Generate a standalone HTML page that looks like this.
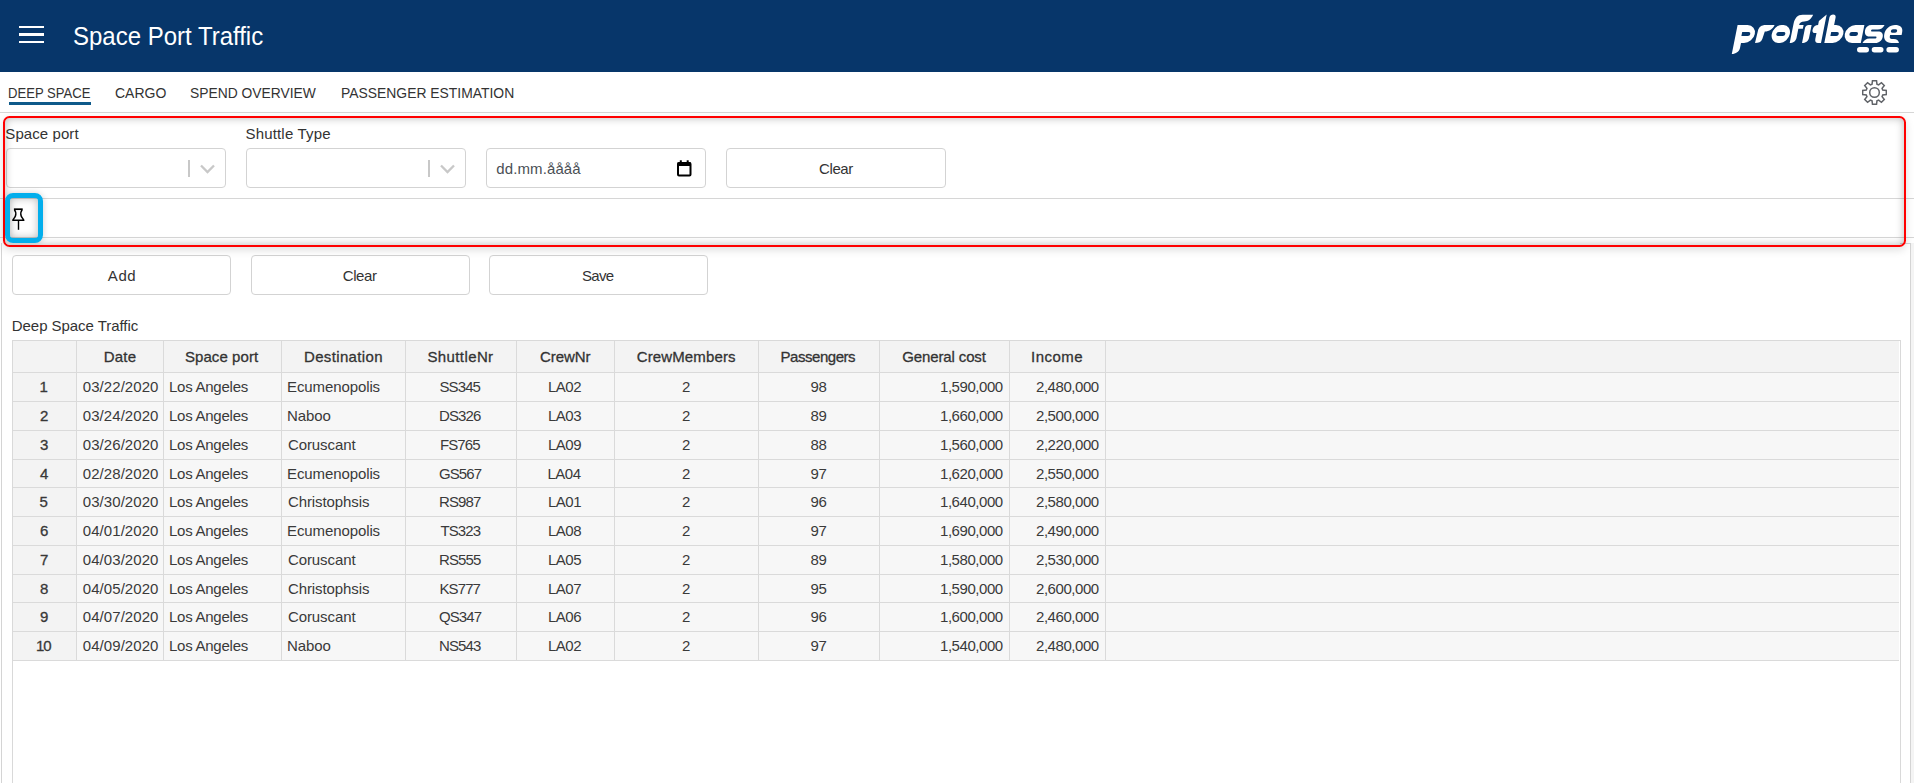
<!DOCTYPE html><html><head><meta charset="utf-8"><title>Space Port Traffic</title><style>
html,body{margin:0;padding:0;}
body{width:1914px;height:783px;overflow:hidden;position:relative;background:#fff;font-family:"Liberation Sans",sans-serif;}
.t{position:absolute;white-space:nowrap;}
.abs{position:absolute;}
</style></head><body>
<div class="abs" style="left:0;top:0;width:1914px;height:72px;background:#07366a"></div>
<div class="abs" style="left:19px;top:26px;width:25px;height:2.3px;background:#fff"></div>
<div class="abs" style="left:19px;top:33px;width:25px;height:3px;background:#fff"></div>
<div class="abs" style="left:19px;top:41px;width:25px;height:2.3px;background:#fff"></div>
<div class="abs" style="left:9px;top:102px;width:82px;height:3px;background:#0e5a8a"></div>
<div class="abs" style="left:0;top:112px;width:1914px;height:1px;background:#d6d6d6"></div>
<div class="abs" style="left:6px;top:148px;width:218px;height:38px;border:1px solid #d3d3d3;border-radius:4px;background:#fff"></div>
<div class="abs" style="left:188px;top:160px;width:1.5px;height:17px;background:#c8c8c8"></div>
<svg class="abs" style="left:200px;top:164px" width="15" height="10" viewBox="0 0 15 10"><path d="M1 1.5 L7.5 8 L14 1.5" fill="none" stroke="#c8c8c8" stroke-width="2.3"/></svg>
<div class="abs" style="left:246px;top:148px;width:218px;height:38px;border:1px solid #d3d3d3;border-radius:4px;background:#fff"></div>
<div class="abs" style="left:428px;top:160px;width:1.5px;height:17px;background:#c8c8c8"></div>
<svg class="abs" style="left:440px;top:164px" width="15" height="10" viewBox="0 0 15 10"><path d="M1 1.5 L7.5 8 L14 1.5" fill="none" stroke="#c8c8c8" stroke-width="2.3"/></svg>
<div class="abs" style="left:486px;top:148px;width:218px;height:38px;border:1px solid #d3d3d3;border-radius:4px;background:#fff"></div>
<svg class="abs" style="left:676.5px;top:159.5px" width="15" height="17" viewBox="0 0 15 17"><rect x="1" y="3" width="12.5" height="12.5" rx="1" fill="none" stroke="#000" stroke-width="2"/><rect x="0.5" y="2.5" width="13.5" height="3.5" fill="#000"/><rect x="2.8" y="0.3" width="2" height="3" fill="#000"/><rect x="9.7" y="0.3" width="2" height="3" fill="#000"/></svg>
<div class="abs" style="left:726px;top:148px;width:218px;height:38px;border:1px solid #d3d3d3;border-radius:4px;background:#fff"></div>
<div class="abs" style="left:0;top:198px;width:1914px;height:1px;background:#d6d6d6"></div>
<div class="abs" style="left:0;top:237px;width:1914px;height:1px;background:#d6d6d6"></div>
<div class="abs" style="left:1px;top:243px;width:1908px;height:540px;border-left:1px solid #d4d4d4;border-right:1px solid #d4d4d4"></div>
<div class="abs" style="left:1900px;top:243px;width:10px;height:1px;background:#d4d4d4"></div>
<div class="abs" style="left:1911px;top:243px;width:3px;height:540px;background:#f4f4f4"></div>
<div class="abs" style="left:12px;top:255px;width:217px;height:38px;border:1px solid #d3d3d3;border-radius:4px;background:#fff"></div>
<div class="abs" style="left:251px;top:255px;width:217px;height:38px;border:1px solid #d3d3d3;border-radius:4px;background:#fff"></div>
<div class="abs" style="left:489px;top:255px;width:217px;height:38px;border:1px solid #d3d3d3;border-radius:4px;background:#fff"></div>
<div class="abs" style="left:12px;top:340px;width:1887px;height:443px;border:1px solid #d9d9d9;border-bottom:none;background:#fff"></div>
<div class="abs" style="left:13px;top:341px;width:1886px;height:31px;background:#f3f3f3"></div>
<div class="abs" style="left:13px;top:373px;width:1886px;height:287px;background:#f7f7f7"></div>
<div class="abs" style="left:13px;top:373px;width:63px;height:287px;background:#f3f3f3"></div>
<div class="abs" style="left:13px;top:372px;width:1886px;height:1px;background:#dadada"></div>
<div class="abs" style="left:13px;top:401px;width:1886px;height:1px;background:#dadada"></div>
<div class="abs" style="left:13px;top:430px;width:1886px;height:1px;background:#dadada"></div>
<div class="abs" style="left:13px;top:459px;width:1886px;height:1px;background:#dadada"></div>
<div class="abs" style="left:13px;top:487px;width:1886px;height:1px;background:#dadada"></div>
<div class="abs" style="left:13px;top:516px;width:1886px;height:1px;background:#dadada"></div>
<div class="abs" style="left:13px;top:545px;width:1886px;height:1px;background:#dadada"></div>
<div class="abs" style="left:13px;top:574px;width:1886px;height:1px;background:#dadada"></div>
<div class="abs" style="left:13px;top:602px;width:1886px;height:1px;background:#dadada"></div>
<div class="abs" style="left:13px;top:631px;width:1886px;height:1px;background:#dadada"></div>
<div class="abs" style="left:13px;top:660px;width:1886px;height:1px;background:#dadada"></div>
<div class="abs" style="left:76px;top:341px;width:1px;height:319px;background:#dadada"></div>
<div class="abs" style="left:163px;top:341px;width:1px;height:319px;background:#dadada"></div>
<div class="abs" style="left:281px;top:341px;width:1px;height:319px;background:#dadada"></div>
<div class="abs" style="left:405px;top:341px;width:1px;height:319px;background:#dadada"></div>
<div class="abs" style="left:516px;top:341px;width:1px;height:319px;background:#dadada"></div>
<div class="abs" style="left:614px;top:341px;width:1px;height:319px;background:#dadada"></div>
<div class="abs" style="left:758px;top:341px;width:1px;height:319px;background:#dadada"></div>
<div class="abs" style="left:879px;top:341px;width:1px;height:319px;background:#dadada"></div>
<div class="abs" style="left:1009px;top:341px;width:1px;height:319px;background:#dadada"></div>
<div class="abs" style="left:1105px;top:341px;width:1px;height:319px;background:#dadada"></div>
<svg class="abs" style="left:1862px;top:80px" width="25" height="25" viewBox="0 0 25 25"><path d="M10.04 4.26 L10.47 0.67 L14.53 0.67 L14.96 4.26 L16.59 4.93 L19.43 2.70 L22.30 5.57 L20.07 8.41 L20.74 10.04 L24.33 10.47 L24.33 14.53 L20.74 14.96 L20.07 16.59 L22.30 19.43 L19.43 22.30 L16.59 20.07 L14.96 20.74 L14.53 24.33 L10.47 24.33 L10.04 20.74 L8.41 20.07 L5.57 22.30 L2.70 19.43 L4.93 16.59 L4.26 14.96 L0.67 14.53 L0.67 10.47 L4.26 10.04 L4.93 8.41 L2.70 5.57 L5.57 2.70 L8.41 4.93 Z" fill="none" stroke="#606368" stroke-width="1.5"/><circle cx="12.5" cy="12.5" r="4.8" fill="none" stroke="#606368" stroke-width="1.5"/></svg>
<svg class="abs" style="left:1720px;top:8px" width="190" height="52" viewBox="1720 8 190 52"><g fill="#fff" fill-rule="evenodd"><g transform="matrix(1,0,-0.2,1,8.6,0)"><path d="M1734,25 H1744 A9,9 0 0 1 1744,43 H1741 V48 C1741,51.5 1738,54 1734,54 Z M1740,32 H1746.5 A2,2 0 0 1 1746.5,36 H1740 Z"/><path d="M1755,43 L1755.5,31 C1755.5,27 1758,25 1762,25 L1771,25 C1770,29 1767,31.5 1762.5,31.5 L1761.5,39 C1761,42 1758.5,43 1755,43 Z"/><path d="M1778,25 H1780 A8,9 0 0 1 1788,34 A8,9 0 0 1 1780,43 H1778 A8,9 0 0 1 1770,34 A8,9 0 0 1 1778,25 Z M1776.5,32 H1781.5 A2,2 0 0 1 1781.5,36 H1776.5 A2,2 0 0 1 1776.5,32 Z"/><path d="M1789.7,43 L1789.7,24 C1789.7,18 1792,14.8 1797,14.8 L1807.5,14.8 C1806.5,19 1804,21.5 1800,21.5 C1797,21.5 1795.5,23 1795.5,25 L1800,25 L1800,28.8 L1795.5,28.8 L1795.5,38 C1795.5,41 1793,43 1789.7,43 Z"/><path d="M1802,43 L1802,28 C1802,26 1803.5,25 1805,25 L1808,25 L1808,38 C1808,41 1805.5,43 1802,43 Z"/><path d="M1821,14.6 L1821,43 L1818,43 C1816,43 1814.5,41.5 1814.5,39 L1814.5,33 L1812.5,33 C1810.5,33 1809.7,31.3 1810,29 C1810.4,26.5 1812,25 1814.5,25 L1814.5,21 Z"/><path d="M1824.3,43 L1824.3,17.5 C1824.3,15.5 1825.8,14.5 1827.5,14.5 C1829.2,14.5 1830.5,15.5 1830.5,17.5 L1830.5,25 L1832.5,25 A9,9 0 0 1 1832.5,43 Z M1829,32 H1835 A2,2 0 0 1 1835,36 H1829 Z"/><path d="M1860.8,25 L1860.8,43 L1852,43 A9,9 0 0 1 1852,25 Z M1849.6,32 H1854.2 A2,2 0 0 1 1854.2,36 H1849.6 A2,2 0 0 1 1849.6,32 Z"/><path d="M1862.5,30 C1862.5,27 1864.5,25 1868,25 L1881,25 C1880,28 1878,29.5 1875,29.5 L1869.5,29.5 C1868.3,29.5 1868.3,31.5 1869.5,31.5 L1875.5,31.5 C1879.5,31.5 1881.5,33.5 1881.5,37 C1881.5,40.5 1879,43 1875.5,43 L1862.5,43 C1863.5,40 1865.5,38.5 1868.5,38.5 L1874.5,38.5 C1875.7,38.5 1875.7,36.5 1874.5,36.5 L1868,36.5 C1864.5,36.5 1862.5,34 1862.5,30 Z"/><path d="M1900,35 L1900,32 C1900,27.5 1896.5,25 1891.5,25 C1886,25 1882.5,29 1882.5,34 C1882.5,39.5 1886,43 1891.5,43 L1899,43 C1898,40.5 1896,39 1893,39 L1891,39 C1889.5,39 1888.5,38 1888.5,36.5 L1888.5,35 Z M1890.2,29.2 H1893 A1.75,1.75 0 0 1 1893,32.7 H1890.2 A1.75,1.75 0 0 1 1890.2,29.2 Z"/></g><rect x="1857" y="47" width="12" height="5.5" rx="2.75"/><rect x="1871.7" y="47" width="11.799999999999955" height="5.5" rx="2.75"/><rect x="1886.4" y="47" width="12.5" height="5.5" rx="2.75"/></g></svg>
<div class="t" style="left:73.0px;top:24.0px;font-size:25px;line-height:25px;color:#fff;transform:scaleX(0.9594);transform-origin:0 0;">Space Port Traffic</div>
<div class="t" style="left:8.2px;top:85.0px;font-size:15.5px;line-height:15.5px;color:#333;transform:scaleX(0.8438);transform-origin:0 0;">DEEP SPACE</div>
<div class="t" style="left:114.9px;top:85.0px;font-size:15.5px;line-height:15.5px;color:#333;transform:scaleX(0.9036);transform-origin:0 0;">CARGO</div>
<div class="t" style="left:190.4px;top:85.0px;font-size:15.5px;line-height:15.5px;color:#333;transform:scaleX(0.8921);transform-origin:0 0;">SPEND OVERVIEW</div>
<div class="t" style="left:340.9px;top:85.0px;font-size:15.5px;line-height:15.5px;color:#333;transform:scaleX(0.8963);transform-origin:0 0;">PASSENGER ESTIMATION</div>
<div class="t" style="left:5.3px;top:126.0px;font-size:15px;line-height:15px;color:#333;letter-spacing:0.08px;">Space port</div>
<div class="t" style="left:245.5px;top:126.0px;font-size:15px;line-height:15px;color:#333;letter-spacing:0.17px;">Shuttle Type</div>
<div class="t" style="left:496.3px;top:161.0px;font-size:15px;line-height:15px;color:#4a4f55;letter-spacing:0.11px;">dd.mm.åååå</div>
<div class="t" style="left:819.0px;top:161.0px;font-size:15px;line-height:15px;color:#333;letter-spacing:-0.38px;">Clear</div>
<div class="t" style="left:107.8px;top:268.0px;font-size:15px;line-height:15px;color:#333;letter-spacing:0.60px;">Add</div>
<div class="t" style="left:342.7px;top:268.0px;font-size:15px;line-height:15px;color:#333;letter-spacing:-0.38px;">Clear</div>
<div class="t" style="left:582.0px;top:268.0px;font-size:15px;line-height:15px;color:#333;letter-spacing:-0.70px;">Save</div>
<div class="t" style="left:11.8px;top:318.0px;font-size:15px;line-height:15px;color:#333;letter-spacing:-0.05px;">Deep Space Traffic</div>
<div class="t" style="left:103.7px;top:349.0px;font-size:15px;line-height:15px;color:#333;letter-spacing:0.23px;-webkit-text-stroke:0.3px #333;">Date</div>
<div class="t" style="left:184.9px;top:349.0px;font-size:15px;line-height:15px;color:#333;letter-spacing:0.08px;-webkit-text-stroke:0.3px #333;">Space port</div>
<div class="t" style="left:304.0px;top:349.0px;font-size:15px;line-height:15px;color:#333;letter-spacing:0.35px;-webkit-text-stroke:0.3px #333;">Destination</div>
<div class="t" style="left:427.4px;top:349.0px;font-size:15px;line-height:15px;color:#333;letter-spacing:0.40px;-webkit-text-stroke:0.3px #333;">ShuttleNr</div>
<div class="t" style="left:540.0px;top:349.0px;font-size:15px;line-height:15px;color:#333;letter-spacing:-0.08px;-webkit-text-stroke:0.3px #333;">CrewNr</div>
<div class="t" style="left:636.7px;top:349.0px;font-size:15px;line-height:15px;color:#333;letter-spacing:0.13px;-webkit-text-stroke:0.3px #333;">CrewMembers</div>
<div class="t" style="left:780.5px;top:349.0px;font-size:15px;line-height:15px;color:#333;letter-spacing:-0.46px;-webkit-text-stroke:0.3px #333;">Passengers</div>
<div class="t" style="left:902.2px;top:349.0px;font-size:15px;line-height:15px;color:#333;letter-spacing:-0.12px;-webkit-text-stroke:0.3px #333;">General cost</div>
<div class="t" style="left:1031.0px;top:349.0px;font-size:15px;line-height:15px;color:#333;letter-spacing:0.46px;-webkit-text-stroke:0.3px #333;">Income</div>
<div class="t" style="left:39.5px;top:379.0px;font-size:15px;line-height:15px;color:#3a3a3a;letter-spacing:-1.00px;-webkit-text-stroke:0.3px #333;">1</div>
<div class="t" style="left:82.8px;top:379.0px;font-size:15px;line-height:15px;color:#3a3a3a;letter-spacing:0.06px;">03/22/2020</div>
<div class="t" style="left:169.0px;top:379.0px;font-size:15px;line-height:15px;color:#3a3a3a;letter-spacing:-0.25px;">Los Angeles</div>
<div class="t" style="left:287.0px;top:379.0px;font-size:15px;line-height:15px;color:#3a3a3a;letter-spacing:-0.10px;">Ecumenopolis</div>
<div class="t" style="left:439.5px;top:379.0px;font-size:15px;line-height:15px;color:#3a3a3a;letter-spacing:-0.90px;">SS345</div>
<div class="t" style="left:548.0px;top:379.0px;font-size:15px;line-height:15px;color:#3a3a3a;letter-spacing:-0.50px;">LA02</div>
<div class="t" style="left:682.0px;top:379.0px;font-size:15px;line-height:15px;color:#3a3a3a;">2</div>
<div class="t" style="left:810.5px;top:379.0px;font-size:15px;line-height:15px;color:#3a3a3a;letter-spacing:-0.30px;">98</div>
<div class="t" style="left:940.0px;top:379.0px;font-size:15px;line-height:15px;color:#3a3a3a;letter-spacing:-0.45px;">1,590,000</div>
<div class="t" style="left:1036.0px;top:379.0px;font-size:15px;line-height:15px;color:#3a3a3a;letter-spacing:-0.45px;">2,480,000</div>
<div class="t" style="left:40.0px;top:408.0px;font-size:15px;line-height:15px;color:#3a3a3a;letter-spacing:-1.00px;-webkit-text-stroke:0.3px #333;">2</div>
<div class="t" style="left:82.8px;top:408.0px;font-size:15px;line-height:15px;color:#3a3a3a;letter-spacing:0.06px;">03/24/2020</div>
<div class="t" style="left:169.0px;top:408.0px;font-size:15px;line-height:15px;color:#3a3a3a;letter-spacing:-0.25px;">Los Angeles</div>
<div class="t" style="left:287.0px;top:408.0px;font-size:15px;line-height:15px;color:#3a3a3a;letter-spacing:-0.10px;">Naboo</div>
<div class="t" style="left:439.0px;top:408.0px;font-size:15px;line-height:15px;color:#3a3a3a;letter-spacing:-0.90px;">DS326</div>
<div class="t" style="left:548.0px;top:408.0px;font-size:15px;line-height:15px;color:#3a3a3a;letter-spacing:-0.50px;">LA03</div>
<div class="t" style="left:682.0px;top:408.0px;font-size:15px;line-height:15px;color:#3a3a3a;">2</div>
<div class="t" style="left:810.5px;top:408.0px;font-size:15px;line-height:15px;color:#3a3a3a;letter-spacing:-0.30px;">89</div>
<div class="t" style="left:940.0px;top:408.0px;font-size:15px;line-height:15px;color:#3a3a3a;letter-spacing:-0.45px;">1,660,000</div>
<div class="t" style="left:1036.0px;top:408.0px;font-size:15px;line-height:15px;color:#3a3a3a;letter-spacing:-0.45px;">2,500,000</div>
<div class="t" style="left:40.0px;top:437.0px;font-size:15px;line-height:15px;color:#3a3a3a;letter-spacing:-1.00px;-webkit-text-stroke:0.3px #333;">3</div>
<div class="t" style="left:82.8px;top:437.0px;font-size:15px;line-height:15px;color:#3a3a3a;letter-spacing:0.06px;">03/26/2020</div>
<div class="t" style="left:169.0px;top:437.0px;font-size:15px;line-height:15px;color:#3a3a3a;letter-spacing:-0.25px;">Los Angeles</div>
<div class="t" style="left:288.0px;top:437.0px;font-size:15px;line-height:15px;color:#3a3a3a;letter-spacing:-0.10px;">Coruscant</div>
<div class="t" style="left:440.0px;top:437.0px;font-size:15px;line-height:15px;color:#3a3a3a;letter-spacing:-0.90px;">FS765</div>
<div class="t" style="left:548.0px;top:437.0px;font-size:15px;line-height:15px;color:#3a3a3a;letter-spacing:-0.50px;">LA09</div>
<div class="t" style="left:682.0px;top:437.0px;font-size:15px;line-height:15px;color:#3a3a3a;">2</div>
<div class="t" style="left:810.5px;top:437.0px;font-size:15px;line-height:15px;color:#3a3a3a;letter-spacing:-0.30px;">88</div>
<div class="t" style="left:940.0px;top:437.0px;font-size:15px;line-height:15px;color:#3a3a3a;letter-spacing:-0.45px;">1,560,000</div>
<div class="t" style="left:1036.0px;top:437.0px;font-size:15px;line-height:15px;color:#3a3a3a;letter-spacing:-0.45px;">2,220,000</div>
<div class="t" style="left:40.0px;top:466.0px;font-size:15px;line-height:15px;color:#3a3a3a;letter-spacing:-1.00px;-webkit-text-stroke:0.3px #333;">4</div>
<div class="t" style="left:82.8px;top:466.0px;font-size:15px;line-height:15px;color:#3a3a3a;letter-spacing:0.06px;">02/28/2020</div>
<div class="t" style="left:169.0px;top:466.0px;font-size:15px;line-height:15px;color:#3a3a3a;letter-spacing:-0.25px;">Los Angeles</div>
<div class="t" style="left:287.0px;top:466.0px;font-size:15px;line-height:15px;color:#3a3a3a;letter-spacing:-0.10px;">Ecumenopolis</div>
<div class="t" style="left:439.0px;top:466.0px;font-size:15px;line-height:15px;color:#3a3a3a;letter-spacing:-0.90px;">GS567</div>
<div class="t" style="left:547.5px;top:466.0px;font-size:15px;line-height:15px;color:#3a3a3a;letter-spacing:-0.50px;">LA04</div>
<div class="t" style="left:682.0px;top:466.0px;font-size:15px;line-height:15px;color:#3a3a3a;">2</div>
<div class="t" style="left:810.5px;top:466.0px;font-size:15px;line-height:15px;color:#3a3a3a;letter-spacing:-0.30px;">97</div>
<div class="t" style="left:940.0px;top:466.0px;font-size:15px;line-height:15px;color:#3a3a3a;letter-spacing:-0.45px;">1,620,000</div>
<div class="t" style="left:1036.0px;top:466.0px;font-size:15px;line-height:15px;color:#3a3a3a;letter-spacing:-0.45px;">2,550,000</div>
<div class="t" style="left:39.5px;top:494.0px;font-size:15px;line-height:15px;color:#3a3a3a;letter-spacing:-1.00px;-webkit-text-stroke:0.3px #333;">5</div>
<div class="t" style="left:82.8px;top:494.0px;font-size:15px;line-height:15px;color:#3a3a3a;letter-spacing:0.06px;">03/30/2020</div>
<div class="t" style="left:169.0px;top:494.0px;font-size:15px;line-height:15px;color:#3a3a3a;letter-spacing:-0.25px;">Los Angeles</div>
<div class="t" style="left:288.0px;top:494.0px;font-size:15px;line-height:15px;color:#3a3a3a;letter-spacing:-0.10px;">Christophsis</div>
<div class="t" style="left:439.0px;top:494.0px;font-size:15px;line-height:15px;color:#3a3a3a;letter-spacing:-0.90px;">RS987</div>
<div class="t" style="left:548.0px;top:494.0px;font-size:15px;line-height:15px;color:#3a3a3a;letter-spacing:-0.50px;">LA01</div>
<div class="t" style="left:682.0px;top:494.0px;font-size:15px;line-height:15px;color:#3a3a3a;">2</div>
<div class="t" style="left:810.5px;top:494.0px;font-size:15px;line-height:15px;color:#3a3a3a;letter-spacing:-0.30px;">96</div>
<div class="t" style="left:940.0px;top:494.0px;font-size:15px;line-height:15px;color:#3a3a3a;letter-spacing:-0.45px;">1,640,000</div>
<div class="t" style="left:1036.0px;top:494.0px;font-size:15px;line-height:15px;color:#3a3a3a;letter-spacing:-0.45px;">2,580,000</div>
<div class="t" style="left:40.0px;top:523.0px;font-size:15px;line-height:15px;color:#3a3a3a;letter-spacing:-1.00px;-webkit-text-stroke:0.3px #333;">6</div>
<div class="t" style="left:82.8px;top:523.0px;font-size:15px;line-height:15px;color:#3a3a3a;letter-spacing:0.06px;">04/01/2020</div>
<div class="t" style="left:169.0px;top:523.0px;font-size:15px;line-height:15px;color:#3a3a3a;letter-spacing:-0.25px;">Los Angeles</div>
<div class="t" style="left:287.0px;top:523.0px;font-size:15px;line-height:15px;color:#3a3a3a;letter-spacing:-0.10px;">Ecumenopolis</div>
<div class="t" style="left:440.5px;top:523.0px;font-size:15px;line-height:15px;color:#3a3a3a;letter-spacing:-0.90px;">TS323</div>
<div class="t" style="left:548.0px;top:523.0px;font-size:15px;line-height:15px;color:#3a3a3a;letter-spacing:-0.50px;">LA08</div>
<div class="t" style="left:682.0px;top:523.0px;font-size:15px;line-height:15px;color:#3a3a3a;">2</div>
<div class="t" style="left:810.5px;top:523.0px;font-size:15px;line-height:15px;color:#3a3a3a;letter-spacing:-0.30px;">97</div>
<div class="t" style="left:940.0px;top:523.0px;font-size:15px;line-height:15px;color:#3a3a3a;letter-spacing:-0.45px;">1,690,000</div>
<div class="t" style="left:1036.0px;top:523.0px;font-size:15px;line-height:15px;color:#3a3a3a;letter-spacing:-0.45px;">2,490,000</div>
<div class="t" style="left:40.0px;top:552.0px;font-size:15px;line-height:15px;color:#3a3a3a;letter-spacing:-1.00px;-webkit-text-stroke:0.3px #333;">7</div>
<div class="t" style="left:82.8px;top:552.0px;font-size:15px;line-height:15px;color:#3a3a3a;letter-spacing:0.06px;">04/03/2020</div>
<div class="t" style="left:169.0px;top:552.0px;font-size:15px;line-height:15px;color:#3a3a3a;letter-spacing:-0.25px;">Los Angeles</div>
<div class="t" style="left:288.0px;top:552.0px;font-size:15px;line-height:15px;color:#3a3a3a;letter-spacing:-0.10px;">Coruscant</div>
<div class="t" style="left:439.0px;top:552.0px;font-size:15px;line-height:15px;color:#3a3a3a;letter-spacing:-0.90px;">RS555</div>
<div class="t" style="left:548.0px;top:552.0px;font-size:15px;line-height:15px;color:#3a3a3a;letter-spacing:-0.50px;">LA05</div>
<div class="t" style="left:682.0px;top:552.0px;font-size:15px;line-height:15px;color:#3a3a3a;">2</div>
<div class="t" style="left:810.5px;top:552.0px;font-size:15px;line-height:15px;color:#3a3a3a;letter-spacing:-0.30px;">89</div>
<div class="t" style="left:940.0px;top:552.0px;font-size:15px;line-height:15px;color:#3a3a3a;letter-spacing:-0.45px;">1,580,000</div>
<div class="t" style="left:1036.0px;top:552.0px;font-size:15px;line-height:15px;color:#3a3a3a;letter-spacing:-0.45px;">2,530,000</div>
<div class="t" style="left:40.0px;top:581.0px;font-size:15px;line-height:15px;color:#3a3a3a;letter-spacing:-1.00px;-webkit-text-stroke:0.3px #333;">8</div>
<div class="t" style="left:82.8px;top:581.0px;font-size:15px;line-height:15px;color:#3a3a3a;letter-spacing:0.06px;">04/05/2020</div>
<div class="t" style="left:169.0px;top:581.0px;font-size:15px;line-height:15px;color:#3a3a3a;letter-spacing:-0.25px;">Los Angeles</div>
<div class="t" style="left:288.0px;top:581.0px;font-size:15px;line-height:15px;color:#3a3a3a;letter-spacing:-0.10px;">Christophsis</div>
<div class="t" style="left:439.5px;top:581.0px;font-size:15px;line-height:15px;color:#3a3a3a;letter-spacing:-0.90px;">KS777</div>
<div class="t" style="left:548.0px;top:581.0px;font-size:15px;line-height:15px;color:#3a3a3a;letter-spacing:-0.50px;">LA07</div>
<div class="t" style="left:682.0px;top:581.0px;font-size:15px;line-height:15px;color:#3a3a3a;">2</div>
<div class="t" style="left:810.5px;top:581.0px;font-size:15px;line-height:15px;color:#3a3a3a;letter-spacing:-0.30px;">95</div>
<div class="t" style="left:940.0px;top:581.0px;font-size:15px;line-height:15px;color:#3a3a3a;letter-spacing:-0.45px;">1,590,000</div>
<div class="t" style="left:1036.0px;top:581.0px;font-size:15px;line-height:15px;color:#3a3a3a;letter-spacing:-0.45px;">2,600,000</div>
<div class="t" style="left:40.0px;top:609.0px;font-size:15px;line-height:15px;color:#3a3a3a;letter-spacing:-1.00px;-webkit-text-stroke:0.3px #333;">9</div>
<div class="t" style="left:82.8px;top:609.0px;font-size:15px;line-height:15px;color:#3a3a3a;letter-spacing:0.06px;">04/07/2020</div>
<div class="t" style="left:169.0px;top:609.0px;font-size:15px;line-height:15px;color:#3a3a3a;letter-spacing:-0.25px;">Los Angeles</div>
<div class="t" style="left:288.0px;top:609.0px;font-size:15px;line-height:15px;color:#3a3a3a;letter-spacing:-0.10px;">Coruscant</div>
<div class="t" style="left:439.0px;top:609.0px;font-size:15px;line-height:15px;color:#3a3a3a;letter-spacing:-0.90px;">QS347</div>
<div class="t" style="left:548.0px;top:609.0px;font-size:15px;line-height:15px;color:#3a3a3a;letter-spacing:-0.50px;">LA06</div>
<div class="t" style="left:682.0px;top:609.0px;font-size:15px;line-height:15px;color:#3a3a3a;">2</div>
<div class="t" style="left:810.5px;top:609.0px;font-size:15px;line-height:15px;color:#3a3a3a;letter-spacing:-0.30px;">96</div>
<div class="t" style="left:940.0px;top:609.0px;font-size:15px;line-height:15px;color:#3a3a3a;letter-spacing:-0.45px;">1,600,000</div>
<div class="t" style="left:1036.0px;top:609.0px;font-size:15px;line-height:15px;color:#3a3a3a;letter-spacing:-0.45px;">2,460,000</div>
<div class="t" style="left:36.0px;top:638.0px;font-size:15px;line-height:15px;color:#3a3a3a;letter-spacing:-1.00px;-webkit-text-stroke:0.3px #333;">10</div>
<div class="t" style="left:82.8px;top:638.0px;font-size:15px;line-height:15px;color:#3a3a3a;letter-spacing:0.06px;">04/09/2020</div>
<div class="t" style="left:169.0px;top:638.0px;font-size:15px;line-height:15px;color:#3a3a3a;letter-spacing:-0.25px;">Los Angeles</div>
<div class="t" style="left:287.0px;top:638.0px;font-size:15px;line-height:15px;color:#3a3a3a;letter-spacing:-0.10px;">Naboo</div>
<div class="t" style="left:439.0px;top:638.0px;font-size:15px;line-height:15px;color:#3a3a3a;letter-spacing:-0.90px;">NS543</div>
<div class="t" style="left:548.0px;top:638.0px;font-size:15px;line-height:15px;color:#3a3a3a;letter-spacing:-0.50px;">LA02</div>
<div class="t" style="left:682.0px;top:638.0px;font-size:15px;line-height:15px;color:#3a3a3a;">2</div>
<div class="t" style="left:810.5px;top:638.0px;font-size:15px;line-height:15px;color:#3a3a3a;letter-spacing:-0.30px;">97</div>
<div class="t" style="left:940.0px;top:638.0px;font-size:15px;line-height:15px;color:#3a3a3a;letter-spacing:-0.45px;">1,540,000</div>
<div class="t" style="left:1036.0px;top:638.0px;font-size:15px;line-height:15px;color:#3a3a3a;letter-spacing:-0.45px;">2,480,000</div>
<div class="abs" style="left:2.5px;top:116px;width:1899.5px;height:126.6px;border-style:solid;border-color:#ff0000;border-width:2.75px 2.3px 2.75px 2.3px;border-radius:6.5px;box-shadow:0 3px 8px rgba(0,0,0,0.13), inset 0 0 9px rgba(0,0,0,0.28)"></div>
<div class="abs" style="left:4.6px;top:193.3px;width:28.8px;height:39.5px;border:5px solid #02aeec;border-radius:8px;box-shadow:0 0 6px rgba(0,0,0,0.18), inset 0 0 8px rgba(0,0,0,0.28)"></div>
<svg class="abs" style="left:11px;top:207px" width="15" height="24" viewBox="0 0 15 24"><path d="M2.9 2.2 H11.7" stroke="#000" stroke-width="1.7"/><path d="M3.4 2.6 C4.9 4.5 4.9 7.3 4.5 8.8 C4.1 10.4 2.6 11.6 1.8 13.1 M11.2 2.6 C9.7 4.5 9.7 7.3 10.1 8.8 C10.5 10.4 12 11.6 12.8 13.1 M1.2 13.3 H13.4" fill="none" stroke="#000" stroke-width="1.5"/><path d="M7.5 13.5 V22.8" stroke="#000" stroke-width="1.4"/></svg>
</body></html>
